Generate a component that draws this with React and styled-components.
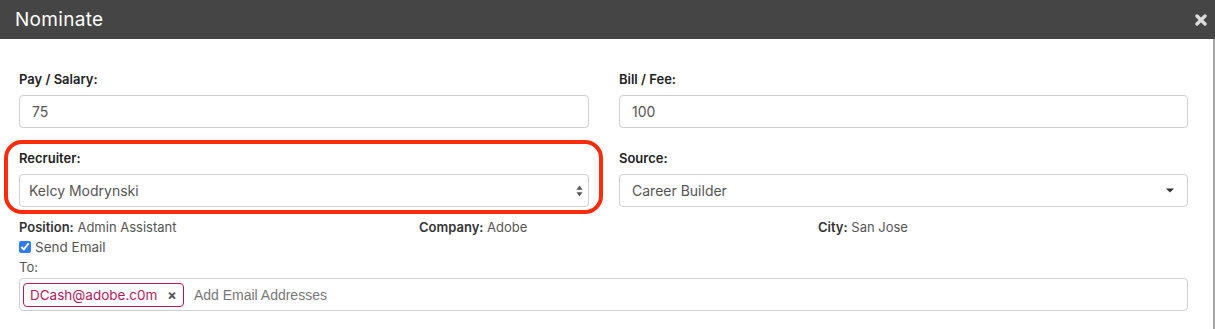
import React from "react";
import styled, { createGlobalStyle } from "styled-components";

const GlobalStyle = createGlobalStyle`
  body {
    margin: 0;
    background: #fff;
    font-family: "Inter", "Open Sans", sans-serif;
  }
`;

const Modal = styled.div`
  width: 1215px;
  height: 329px;
  background: #fff;
  overflow: hidden;
`;

const Header = styled.div`
  height: 39px;
  background: #454545;
  display: flex;
  align-items: center;
  justify-content: space-between;
  padding: 0 8px 0 15px;
  box-sizing: border-box;
`;

const Title = styled.h4`
  margin: 0;
  color: #fff;
  font-size: 19px;
  font-weight: 400;
  letter-spacing: 0.3px;
`;

const Close = styled.button`
  border: none;
  background: none;
  padding: 0;
  width: 12px;
  height: 12px;
  display: flex;
  cursor: pointer;
`;

const Body = styled.div`
  height: 290px;
  box-sizing: border-box;
  padding: 30px 25px 0 19px;
  border-right: 2px solid #a5a5a5;
`;

const Row = styled.div`
  display: grid;
  grid-template-columns: 570px 569px;
  column-gap: 30px;
  margin-bottom: ${(p) => p.$mb || 0}px;
`;

const Field = styled.div`
  position: relative;
`;

const Highlight = styled.div`
  position: absolute;
  inset: -8px -14px -7px -15px;
  border: 4px solid #fe2a0c;
  border-radius: 18px;
  pointer-events: none;
`;

const Label = styled.div`
  font-size: 13px;
  font-weight: 600;
  color: #222;
  line-height: 20px;
  margin-bottom: 6px;
`;

const Box = styled.div`
  height: 33px;
  box-sizing: border-box;
  border: 1px solid #cfcfcf;
  border-radius: 4px;
  display: flex;
  align-items: center;
  justify-content: space-between;
  padding: 0 ${(p) => p.$pr || 12}px 0 ${(p) => p.$pl || 12}px;
  font-size: 14px;
  color: #555;
  background: #fff;
`;

const Info = styled.div`
  display: grid;
  grid-template-columns: 400px 399px 1fr;
  font-size: 13px;
  line-height: 20px;
  color: #555;
  margin-top: 10px;
`;

const Key = styled.span`
  font-weight: 600;
  color: #333;
`;

const Check = styled.label`
  display: flex;
  align-items: center;
  gap: 4px;
  font-size: 13.5px;
  line-height: 20px;
  color: #555;
`;

const CheckBox = styled.input`
  margin: 0;
  width: 12px;
  height: 12px;
  accent-color: #2f7df6;
`;

const ToLabel = styled.div`
  font-size: 13px;
  line-height: 20px;
  color: #555;
  margin-bottom: 1px;
`;

const EmailBox = styled.div`
  height: 33px;
  box-sizing: border-box;
  border: 1px solid #cfcfcf;
  border-radius: 4px;
  display: flex;
  align-items: center;
  gap: 10px;
  padding: 0 3px;
`;

const Tag = styled.span`
  height: 24px;
  box-sizing: border-box;
  border: 1px solid #b8185c;
  border-radius: 4px;
  display: flex;
  align-items: center;
  gap: 10px;
  padding: 0 6px 0 6px;
  color: #b8185c;
  font-size: 13.5px;
`;

const TagX = styled.span`
  color: #555;
  font-weight: 700;
  font-size: 14px;
`;

const Placeholder = styled.span`
  font-family: "Liberation Sans", Arial, sans-serif;
  font-size: 14px;
  color: #777;
`;

const UpDown = () => (
  <svg width="7" height="12" viewBox="0 0 7 12">
    <path d="M3.5 0.5 L6.5 4.8 H0.5 Z M3.5 11.5 L0.5 7.2 H6.5 Z" fill="#555" />
  </svg>
);

const Caret = () => (
  <svg width="8" height="5" viewBox="0 0 8 5">
    <path d="M0 0.5 H8 L4 4.5 Z" fill="#333" />
  </svg>
);

export default function App() {
  return (
    <>
      <GlobalStyle />
      <Modal>
        <Header>
          <Title>Nominate</Title>
          <Close aria-label="close">
            <svg width="12" height="12" viewBox="0 0 12 12">
              <path d="M2 2 L10 10 M10 2 L2 10" stroke="#dcdcdc" strokeWidth="3.4" strokeLinecap="round" />
            </svg>
          </Close>
        </Header>
        <Body>
          <Row $mb={20}>
            <Field>
              <Label>Pay / Salary:</Label>
              <Box>75</Box>
            </Field>
            <Field>
              <Label>Bill / Fee:</Label>
              <Box>100</Box>
            </Field>
          </Row>
          <Row>
            <Field>
              <Highlight />
              <Label>Recruiter:</Label>
              <Box $pl={9} $pr={5}>
                Kelcy Modrynski
                <UpDown />
              </Box>
            </Field>
            <Field>
              <Label>Source:</Label>
              <Box $pl={12} $pr={13}>
                Career Builder
                <Caret />
              </Box>
            </Field>
          </Row>
          <Info>
            <div><Key>Position:</Key> Admin Assistant</div>
            <div><Key>Company:</Key> Adobe</div>
            <div><Key>City:</Key> San Jose</div>
          </Info>
          <Check>
            <CheckBox type="checkbox" defaultChecked />
            Send Email
          </Check>
          <ToLabel>To:</ToLabel>
          <EmailBox>
            <Tag>
              DCash@adobe.c0m
              <TagX>×</TagX>
            </Tag>
            <Placeholder>Add Email Addresses</Placeholder>
          </EmailBox>
        </Body>
      </Modal>
    </>
  );
}
